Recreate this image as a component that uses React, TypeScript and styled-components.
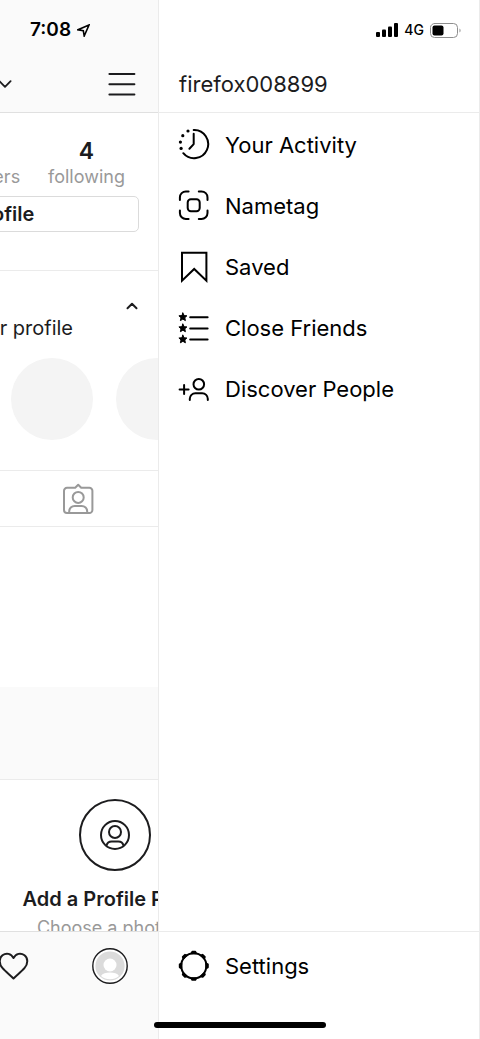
import React from "react";
import styled, { createGlobalStyle, css } from "styled-components";

const GlobalStyle = createGlobalStyle`
  *, *::before, *::after { box-sizing: border-box; }
  body {
    margin: 0;
    background: #fff;
    color: #1c1c1e;
    font-family: Inter, "Liberation Sans", sans-serif;
  }
  button { font: inherit; color: inherit; background: none; border: 0; padding: 0; cursor: pointer; }
  a { color: inherit; text-decoration: none; }
  h1, h2, p, ul { margin: 0; padding: 0; font-weight: 400; }
  ul { list-style: none; }
  svg { display: block; flex: none; }
`;

const line = "#ebebeb";
const shade = "#fafafa";

const Screen = styled.div`
  display: flex;
  height: 100vh;
  overflow: hidden;
`;

const ProfilePane = styled.div`
  flex: 0 0 158px;
  min-width: 0;
  display: flex;
  flex-direction: column;
  overflow: hidden;
`;

const Drawer = styled.aside`
  flex: 1;
  min-width: 0;
  display: flex;
  flex-direction: column;
  background: #fff;
  border-left: 1px solid ${line};
  border-right: 1px solid ${line};
`;

const TopBar = styled.header<{ $shaded?: boolean }>`
  flex: none;
  height: 113px;
  display: flex;
  flex-direction: column;
  border-bottom: 1px solid ${line};
  ${(p) => p.$shaded && css`background: ${shade}; border-bottom-color: #e0e0e0;`}
`;

const StatusRow = styled.div<{ $end?: boolean }>`
  height: 56px;
  padding: 4px 18px 0 30px;
  display: flex;
  align-items: center;
  gap: 6px;
  justify-content: ${(p) => (p.$end ? "flex-end" : "flex-start")};
  color: #000;
`;

const Clock = styled.span`
  font-size: 19px;
  line-height: 24px;
  font-weight: 600;
`;

const Network = styled.span`
  font-size: 14px;
  line-height: 20px;
  font-weight: 500;
`;

const ProfileBar = styled.div`
  flex: 1;
  display: flex;
  align-items: center;
  justify-content: flex-end;
  gap: 96px;
  padding-right: 22px;
`;

const UserName = styled.h1`
  flex: 1;
  padding-left: 20px;
  font-size: 22px;
  line-height: 56px;
`;

const Feed = styled.main`
  flex: 1;
  min-height: 0;
  overflow: hidden;
  display: flex;
  flex-direction: column;
`;

const Section = styled.section<{ $height: number; $shaded?: boolean; $line?: boolean }>`
  flex: none;
  height: ${(p) => p.$height}px;
  display: flex;
  flex-direction: column;
  background: ${(p) => (p.$shaded ? shade : "#fff")};
  border-bottom: ${(p) => (p.$line ? `1px solid ${line}` : "0")};
`;

const Summary = styled(Section)`
  align-items: flex-end;
  padding: 24px 19px 0 0;
  gap: 7px;
`;

const Stats = styled.div`
  display: flex;
  align-items: flex-end;
`;

const Stat = styled.div`
  width: 105px;
  display: flex;
  flex-direction: column;
  align-items: center;
`;

const StatCount = styled.strong`
  font-size: 23px;
  line-height: 28px;
  font-weight: 600;
`;

const StatLabel = styled.span`
  font-size: 18px;
  line-height: 24px;
  color: #999;
`;

const EditButton = styled.button`
  width: 314px;
  height: 36px;
  border: 1px solid #dbdbdb;
  border-radius: 5px;
  font-size: 20px;
  line-height: 24px;
  font-weight: 600;
`;

const Highlights = styled(Section)`
  align-items: flex-end;
  padding-top: 25px;
`;

const Toggle = styled.button`
  width: 40px;
  height: 20px;
  margin-right: 6px;
  display: grid;
  place-items: center;
`;

const Hint = styled.p`
  padding-right: 85px;
  font-size: 20px;
  line-height: 24px;
  white-space: nowrap;
`;

const Bubbles = styled.div`
  align-self: flex-start;
  display: flex;
  gap: 23px;
  padding: 18px 0 0 11px;
`;

const Bubble = styled.div`
  flex: none;
  width: 82px;
  height: 82px;
  border-radius: 50%;
  background: #f4f4f4;
`;

const Tab = styled.button`
  flex: 1;
  display: grid;
  place-items: center;
  color: #999;
`;

const SetupCard = styled.section`
  flex: none;
  width: 184px;
  margin-left: 23px;
  padding-top: 19px;
  display: flex;
  flex-direction: column;
  align-items: center;
  text-align: center;
  white-space: nowrap;
`;

const PhotoRing = styled.div`
  width: 72px;
  height: 72px;
  border: 2px solid #1c1c1e;
  border-radius: 50%;
  display: grid;
  place-items: center;
`;

const CardTitle = styled.h2`
  margin-top: 14px;
  font-size: 20px;
  line-height: 28px;
  font-weight: 600;
`;

const CardText = styled.p`
  margin-top: 3px;
  font-size: 18px;
  line-height: 24px;
  color: #999;
`;

const TabBar = styled.nav`
  flex: none;
  height: 108px;
  display: flex;
  align-items: flex-start;
  justify-content: flex-end;
  gap: 62px;
  padding: 16px 30px 0 0;
  background: ${shade};
  border-top: 1px solid #e0e0e0;
`;

const NavButton = styled.button`
  height: 36px;
  display: grid;
  place-items: center;
`;

const Menu = styled.ul`
  flex: 1;
  display: flex;
  flex-direction: column;
  gap: 17px;
  padding-top: 10px;
`;

const MenuLink = styled.a`
  height: 44px;
  padding-left: 19px;
  display: flex;
  align-items: center;
  gap: 15px;
  color: #000;
  font-size: 22px;
  line-height: 28px;
`;

const DrawerFooter = styled.footer`
  flex: none;
  height: 108px;
  padding-top: 12px;
  border-top: 1px solid ${line};
`;

const HomeIndicator = styled.div`
  position: fixed;
  bottom: 11px;
  left: 50%;
  width: 172px;
  height: 6px;
  border-radius: 3px;
  background: #000;
  transform: translateX(-50%);
`;

const Icon = ({ w = 32, h = 32, sw = 2, children }: {
  w?: number; h?: number; sw?: number; children: React.ReactNode;
}) => (
  <svg width={w} height={h} viewBox={`0 0 ${w} ${h}`} fill="none" stroke="currentColor"
    strokeWidth={sw} strokeLinecap="round" strokeLinejoin="round" aria-hidden="true">
    {children}
  </svg>
);

const ActivityIcon = () => (
  <Icon>
    <path d="M15.7 1a14.1 14.1 0 1 1-10.4 23.2" />
    <path d="M15.7 4.700V15.100l-4.300 4.600" />
    <g fill="currentColor" stroke="none">
      <circle cx="10" cy="2" r="1.600" />
      <circle cx="4.800" cy="6.700" r="1.600" />
      <circle cx="2.400" cy="13.100" r="1.600" />
      <circle cx="3.100" cy="19.400" r="1.600" />
    </g>
  </Icon>
);

const NametagIcon = () => (
  <Icon>
    <path d="M1.9 10V7.400a6 6 0 0 1 6-6h2.700M20.800 1.400h2.700a6 6 0 0 1 6 6V10M29.500 20.400V23a6 6 0 0 1-6 6h-2.700M10.600 29H7.900a6 6 0 0 1-6-6v-2.600" />
    <rect x="9.700" y="9.200" width="12" height="12" rx="3.200" />
  </Icon>
);

const SavedIcon = () => (
  <Icon>
    <path d="M4 1.800h24.400V29.600L16.200 18 4 29.600z" strokeLinejoin="miter" />
  </Icon>
);

const star = "M0-4 1.2-1.4 4-1.2 1.9.7 2.5 3.6 0 2.1-2.5 3.6-1.9.7-4-1.2-1.2-1.4Z";

const CloseFriendsIcon = () => (
  <Icon>
    {[5.3, 16.4, 27.5].map((y) => (
      <g key={y}>
        <path d={`M12.2 ${y}h17.4`} />
        <path d={star} transform={`translate(4.9 ${y - 0.3})`} fill="currentColor" strokeWidth="1" />
      </g>
    ))}
  </Icon>
);

const DiscoverIcon = () => (
  <Icon>
    <path d="M1.6 16.6h9M6.1 12.1v9" />
    <circle cx="20.8" cy="11.2" r="5.3" />
    <path d="M11.8 26.9v-1.1a5.6 5.6 0 0 1 5.6-5.6h6.8a5.6 5.6 0 0 1 5.6 5.6v1.1" />
  </Icon>
);

const SettingsIcon = () => (
  <Icon>
    <circle cx="15.8" cy="15.8" r="12.6" />
    {[0, 45, 90, 135, 180, 225, 270, 315].map((a) => (
      <path key={a} d="M-2.2-12.5-1.5-14H1.5L2.200-12.500Z" fill="currentColor"
        transform={`translate(15.8 15.8) rotate(${a})`} />
    ))}
  </Icon>
);

const menu = [
  { label: "Your Activity", icon: <ActivityIcon /> },
  { label: "Nametag", icon: <NametagIcon /> },
  { label: "Saved", icon: <SavedIcon /> },
  { label: "Close Friends", icon: <CloseFriendsIcon /> },
  { label: "Discover People", icon: <DiscoverIcon /> },
];

export default function App() {
  return (
    <Screen>
      <GlobalStyle />
      <ProfilePane>
        <TopBar $shaded>
          <StatusRow>
            <Clock>7:08</Clock>
            <Icon w={13} h={13} sw={1.6}>
              <path d="M12 1 1 5.8l5.3.8.9 5.4z" strokeLinejoin="miter" />
            </Icon>
          </StatusRow>
          <ProfileBar>
            <button aria-label="Switch account">
              <Icon w={14} h={8} sw={1.8}><path d="M1.4 1.2 7 6.8l5.6-5.6" /></Icon>
            </button>
            <button aria-label="Menu">
              <Icon w={28} h={28}><path d="M1.4 4h25M1.4 14.3h25M1.4 24.6h25" /></Icon>
            </button>
          </ProfileBar>
        </TopBar>

        <Feed>
          <Summary $height={158} $line>
            <Stats>
              <Stat><StatLabel>followers</StatLabel></Stat>
              <Stat>
                <StatCount>4</StatCount>
                <StatLabel>following</StatLabel>
              </Stat>
            </Stats>
            <EditButton>Edit Profile</EditButton>
          </Summary>

          <Highlights $height={200} $line>
            <Toggle aria-label="Collapse highlights">
              <Icon w={12} h={8}><path d="M1.5 6.2 6 1.8l4.5 4.4" /></Icon>
            </Toggle>
            <Hint>Keep your favorite stories on your profile</Hint>
            <Bubbles>
              <Bubble />
              <Bubble />
            </Bubbles>
          </Highlights>

          <Section $height={56} $line>
            <Tab aria-label="Photos of you">
              <Icon>
                <path d="M4 4.8h8.2l3-3 3 3h8.2a3 3 0 0 1 3 3V27a3 3 0 0 1-3 3H4a3 3 0 0 1-3-3V7.8a3 3 0 0 1 3-3z" />
                <circle cx="15.2" cy="14.4" r="5.5" />
                <path d="M6.2 29.6v-1.2a5.5 5.5 0 0 1 5.5-5.5h7a5.5 5.5 0 0 1 5.5 5.5v1.2" />
              </Icon>
            </Tab>
          </Section>

          <Section $height={160} />
          <Section $height={93} $shaded $line />

          <SetupCard>
            <PhotoRing>
              <Icon>
                <circle cx="16" cy="16" r="14" />
                <circle cx="16" cy="13" r="6" />
                <path d="M7.5 26.6c.6-2.9 2.5-4.2 5.2-4.2h6.6c2.7 0 4.6 1.3 5.2 4.2" />
              </Icon>
            </PhotoRing>
            <CardTitle>Add a Profile Photo</CardTitle>
            <CardText>Choose a photo to</CardText>
          </SetupCard>
        </Feed>

        <TabBar>
          <NavButton aria-label="Activity">
            <Icon w={32} h={28}>
              <path d="M15.5 26.5C12 23 7.500 19.600 4.600 16.200.6 11.500 1 6 4.500 3.300 8.200.5 13 1.400 15.500 6c2.500-4.600 7.300-5.500 11-2.700C30 6 30.400 11.500 26.400 16.200c-2.900 3.400-7.400 6.800-10.900 10.300z" />
            </Icon>
          </NavButton>
          <NavButton aria-label="Profile">
            <Icon w={36} h={36} sw={1.4}>
              <circle cx="18" cy="18" r="17.2" fill="#fff" />
              <g stroke="none">
                <circle cx="18" cy="18" r="14.6" fill="#dbdbdb" />
                <circle cx="18" cy="17" r="6.5" fill="#fff" />
                <path d="M9 28c1.500-2.600 5-3.400 9-3.400s7.500.8 9 3.400a14 14 0 0 1-18 0z" fill="#fff" />
              </g>
            </Icon>
          </NavButton>
        </TabBar>
      </ProfilePane>

      <Drawer>
        <TopBar>
          <StatusRow $end>
            <Icon w={22} h={14}>
              <g fill="currentColor" stroke="none">
                <rect x="0" y="9" width="4" height="5" rx="1" />
                <rect x="6" y="6.5" width="4" height="7.5" rx="1" />
                <rect x="12" y="3.5" width="4" height="10.5" rx="1" />
                <rect x="18" y="0" width="4" height="14" rx="1" />
              </g>
            </Icon>
            <Network>4G</Network>
            <Icon w={31} h={15} sw={1}>
              <rect x=".5" y=".5" width="27" height="14" rx="4" stroke="#8e8e8e" />
              <rect x="2.5" y="2.5" width="11" height="10" rx="2" fill="currentColor" stroke="none" />
              <path d="M29.5 5.5c1.4.7 1.4 3.3 0 4z" fill="#8e8e8e" stroke="none" />
            </Icon>
          </StatusRow>
          <UserName>firefox008899</UserName>
        </TopBar>

        <Menu>
          {menu.map((item) => (
            <li key={item.label}>
              <MenuLink href="#">{item.icon}{item.label}</MenuLink>
            </li>
          ))}
        </Menu>

        <DrawerFooter>
          <MenuLink href="#"><SettingsIcon />Settings</MenuLink>
        </DrawerFooter>
      </Drawer>

      <HomeIndicator />
    </Screen>
  );
}
